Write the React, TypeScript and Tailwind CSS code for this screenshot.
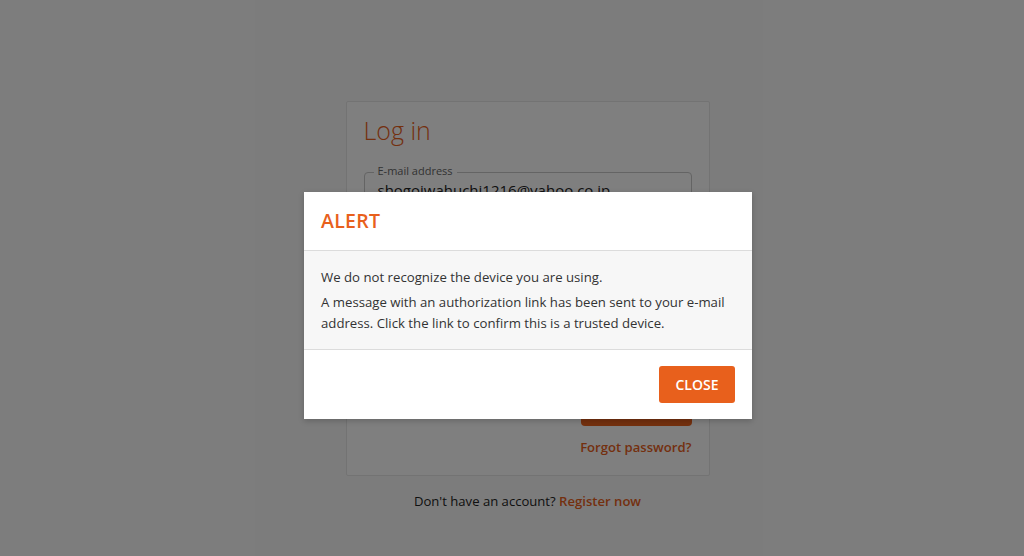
import React from "react";

export default function App() {
  const font = { fontFamily: '"Open Sans", "Noto Sans", sans-serif' };
  return (
    <div className="relative w-[1024px] h-[556px] overflow-hidden bg-[#f9f9f9]" style={font}>
      {/* Underlying page */}
      <div className="flex flex-col items-center pt-[101px] pl-[31px]">
        <div className="w-[364px] h-[375px] bg-white border border-[#e6e6e6] rounded-[2px] px-[17px] pt-[12px]">
          <h1 className="text-[25px] font-light text-[#e8601c] leading-[32px]">Log in</h1>
          <div className="relative mt-[26px] h-[46px] border border-[#c8c8c8] rounded-[4px] px-[13px]">
            <span className="absolute -top-[9px] left-[9px] bg-white px-[4px] text-[11px] leading-[14px] text-[#666]">E-mail address</span>
            <div className="pt-[7px] text-[15px] text-[#222] leading-[20px]">shogoiwahuchi1216@yahoo.co.jp</div>
          </div>
          <div className="relative mt-[20px] h-[46px] border border-[#c8c8c8] rounded-[4px] px-[13px]">
            <span className="absolute -top-[9px] left-[9px] bg-white px-[4px] text-[11px] leading-[14px] text-[#666]">Password</span>
          </div>
          <div className="mt-[16px] flex items-center gap-[8px] text-[13px] text-[#333] h-[20px]">
            <span className="w-[16px] h-[16px] border border-[#c8c8c8] rounded-[2px]" />
            <span>Keep me logged in</span>
          </div>
          <div className="mt-[68px] flex justify-end">
            <div className="w-[111px] h-[38px] rounded-[4px] bg-[#e8601c] text-white font-semibold text-[14px] flex items-center justify-center">LOG IN</div>
          </div>
          <div className="mt-[11px] text-right text-[13.1px] leading-[20px] font-semibold text-[#e8601c]">Forgot password?</div>
        </div>
        <div className="mt-[16px] text-[13.1px] text-[#222]">
          Don't have an account? <span className="font-semibold text-[#e8601c]">Register now</span>
        </div>
      </div>

      {/* Overlay */}
      <div className="absolute inset-0 bg-black/50 flex justify-center pt-[192px] pl-[32px]">
        <div className="w-[448px] h-[227px] bg-white shadow-[0_2px_6px_rgba(0,0,0,0.2)] flex flex-col">
          <div className="h-[59px] px-[17px] flex items-center border-b border-[#dcdcdc]">
            <span className="text-[19.5px] font-semibold text-[#e8601c] tracking-[0.3px]">ALERT</span>
          </div>
          <div className="bg-[#f7f7f7] px-[17px] pt-[16px] pb-[15px] text-[13.2px] leading-[21px] text-[#333] border-b border-[#dcdcdc]">
            <p className="mb-[4px]">We do not recognize the device you are using.</p>
            <p>A message with an authorization link has been sent to your e&#8209;mail address. Click the link to confirm this is a trusted device.</p>
          </div>
          <div className="flex-1 flex justify-end items-start pt-[16px] pr-[17px]">
            <button className="w-[76px] h-[37px] rounded-[3px] bg-[#e8601c] text-white text-[14px] font-semibold">CLOSE</button>
          </div>
        </div>
      </div>
    </div>
  );
}
